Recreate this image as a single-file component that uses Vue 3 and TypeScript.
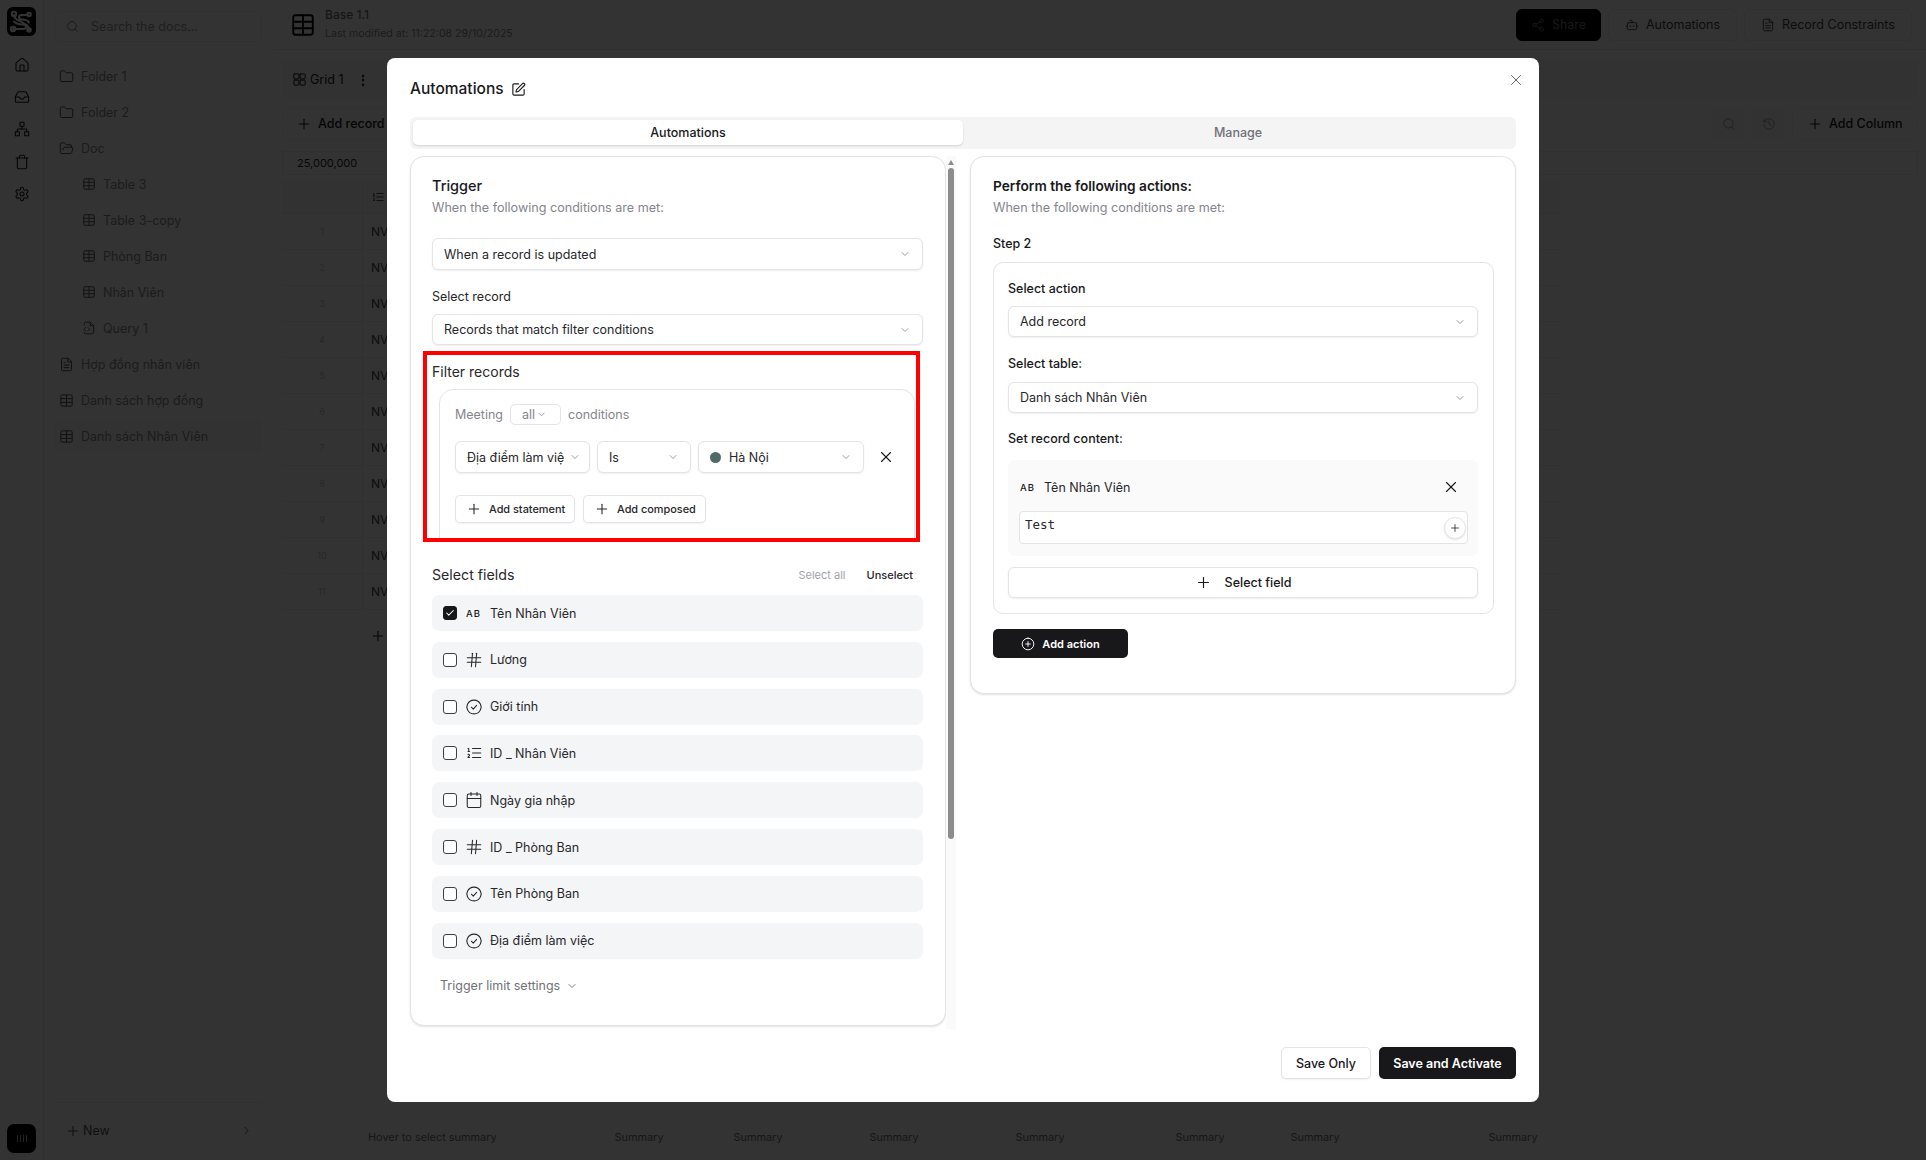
<script setup lang="ts">
const icons: Record<string, string[]> = {
  home: ['M15 21v-8a1 1 0 0 0-1-1h-4a1 1 0 0 0-1 1v8', 'M3 10a2 2 0 0 1 .709-1.528l7-5.999a2 2 0 0 1 2.582 0l7 5.999A2 2 0 0 1 21 10v9a2 2 0 0 1-2 2H5a2 2 0 0 1-2-2z'],
  inbox: ['M22 12h-6l-2 3h-4l-2-3H2', 'M5.45 5.11 2 12v6a2 2 0 0 0 2 2h16a2 2 0 0 0 2-2v-6l-3.45-6.89A2 2 0 0 0 16.76 4H7.24a2 2 0 0 0-1.79 1.11z'],
  network: ['M16 16h6v6h-6z', 'M2 16h6v6H2z', 'M9 2h6v6H9z', 'M5 16v-3a1 1 0 0 1 1-1h12a1 1 0 0 1 1 1v3', 'M12 12V8'],
  trash: ['M3 6h18', 'M19 6v14a2 2 0 0 1-2 2H7a2 2 0 0 1-2-2V6', 'M8 6V4a2 2 0 0 1 2-2h4a2 2 0 0 1 2 2v2'],
  settings: ['M12.22 2h-.44a2 2 0 0 0-2 2v.18a2 2 0 0 1-1 1.73l-.43.25a2 2 0 0 1-2 0l-.15-.08a2 2 0 0 0-2.73.73l-.22.38a2 2 0 0 0 .73 2.73l.15.1a2 2 0 0 1 1 1.72v.51a2 2 0 0 1-1 1.74l-.15.09a2 2 0 0 0-.73 2.73l.22.38a2 2 0 0 0 2.73.73l.15-.08a2 2 0 0 1 2 0l.43.25a2 2 0 0 1 1 1.73V20a2 2 0 0 0 2 2h.44a2 2 0 0 0 2-2v-.18a2 2 0 0 1 1-1.73l.43-.25a2 2 0 0 1 2 0l.15.08a2 2 0 0 0 2.73-.73l.22-.39a2 2 0 0 0-.73-2.73l-.15-.08a2 2 0 0 1-1-1.74v-.5a2 2 0 0 1 1-1.74l.15-.09a2 2 0 0 0 .73-2.73l-.22-.38a2 2 0 0 0-2.73-.73l-.15.08a2 2 0 0 1-2 0l-.43-.25a2 2 0 0 1-1-1.73V4a2 2 0 0 0-2-2z', 'M12 9a3 3 0 1 0 0 6 3 3 0 0 0 0-6z'],
  folder: ['M20 20a2 2 0 0 0 2-2V8a2 2 0 0 0-2-2h-7.9a2 2 0 0 1-1.69-.9L9.6 3.9A2 2 0 0 0 7.93 3H4a2 2 0 0 0-2 2v13a2 2 0 0 0 2 2Z'],
  folderOpen: ['m6 14 1.5-2.9A2 2 0 0 1 9.24 10H20a2 2 0 0 1 1.94 2.5l-1.54 6a2 2 0 0 1-1.95 1.5H4a2 2 0 0 1-2-2V5a2 2 0 0 1 2-2h3.9a2 2 0 0 1 1.69.9l.81 1.2a2 2 0 0 0 1.67.9H18a2 2 0 0 1 2 2v2'],
  table: ['M3 5a2 2 0 0 1 2-2h14a2 2 0 0 1 2 2v14a2 2 0 0 1-2 2H5a2 2 0 0 1-2-2z', 'M3 9h18', 'M3 15h18', 'M12 3v18'],
  fileCode: ['M4 7V4a2 2 0 0 1 2-2h8l6 6v12a2 2 0 0 1-2 2H6a2 2 0 0 1-2-2v-1', 'M14 2v6h6', 'm6 11-3 3 3 3', 'm10 11 3 3-3 3'],
  fileText: ['M14 2H6a2 2 0 0 0-2 2v16a2 2 0 0 0 2 2h12a2 2 0 0 0 2-2V8z', 'M14 2v6h6', 'M8 13h8', 'M8 17h8', 'M8 9h2'],
  search: ['M11 3a8 8 0 1 0 0 16 8 8 0 0 0 0-16z', 'm21 21-4.3-4.3'],
  plus: ['M5 12h14', 'M12 5v14'],
  x: ['M18 6 6 18', 'm6 6 12 12'],
  down: ['m6 9 6 6 6-6'],
  right: ['m9 18 6-6-6-6'],
  grid: ['M4 3h6a1 1 0 0 1 1 1v6a1 1 0 0 1-1 1H4a1 1 0 0 1-1-1V4a1 1 0 0 1 1-1z', 'M14 3h6a1 1 0 0 1 1 1v6a1 1 0 0 1-1 1h-6a1 1 0 0 1-1-1V4a1 1 0 0 1 1-1z', 'M4 13h6a1 1 0 0 1 1 1v6a1 1 0 0 1-1 1H4a1 1 0 0 1-1-1v-6a1 1 0 0 1 1-1z', 'M14 13h6a1 1 0 0 1 1 1v6a1 1 0 0 1-1 1h-6a1 1 0 0 1-1-1v-6a1 1 0 0 1 1-1z'],
  share: ['M18 2a3 3 0 1 0 0 6 3 3 0 0 0 0-6z', 'M6 9a3 3 0 1 0 0 6 3 3 0 0 0 0-6z', 'M18 16a3 3 0 1 0 0 6 3 3 0 0 0 0-6z', 'm8.6 13.5 6.8 4', 'm15.4 6.5-6.8 4'],
  bot: ['M12 8V4H8', 'M6 8h12a2 2 0 0 1 2 2v8a2 2 0 0 1-2 2H6a2 2 0 0 1-2-2v-8a2 2 0 0 1 2-2z', 'M2 14h2', 'M20 14h2', 'M15 13v2', 'M9 13v2'],
  history: ['M3 12a9 9 0 1 0 9-9 9.75 9.75 0 0 0-6.74 2.74L3 8', 'M3 3v5h5', 'M12 7v5l4 2'],
  edit: ['M12 3H5a2 2 0 0 0-2 2v14a2 2 0 0 0 2 2h14a2 2 0 0 0 2-2v-7', 'M18.375 2.625a1 1 0 0 1 3 3l-9.013 9.014a2 2 0 0 1-.853.505l-2.873.84a.5.5 0 0 1-.62-.62l.84-2.873a2 2 0 0 1 .506-.852z'],
  hash: ['M3 9h18', 'M3 15h18', 'M10 3 8.500 21', 'M15.500 3 14 21'],
  status: ['M3.300 8.500A9.500 9.500 0 0 1 20.700 8.500', 'M3.300 15.500A9.500 9.500 0 0 0 20.700 15.500', 'M3.300 8.500 2.400 12l.9 3.500', 'M20.700 8.500l.9 3.500-.9 3.500', 'm8.500 12.300 2.500 2.500 4.500-5'],
  list: ['M10 12h11', 'M10 18h11', 'M10 6h11', 'M4 10h2', 'M4 6h1v4', 'M6 18H4c0-1 2-2 2-3s-1-1.5-2-1'],
  calendar: ['M8 2v4', 'M16 2v4', 'M3 6a2 2 0 0 1 2-2h14a2 2 0 0 1 2 2v14a2 2 0 0 1-2 2H5a2 2 0 0 1-2-2z', 'M3 10h18'],
  plusCircle: ['M12 2a10 10 0 1 0 0 20 10 10 0 0 0 0-20z', 'M8 12h8', 'M12 8v8'],
  check: ['M20 6 9 17l-5-5'],
  logo: ['M6 7C6 12 11 12 14.500 14.500S21 17 21 22', 'M20 7h-6c-4 0-4 4.500 0 4.500s6 1 7 3', 'M5 21h10c4 0 4-4.500 0-4.500s-7-1-9-3'],
}

const railIcons = ['home', 'inbox', 'network', 'trash', 'settings']
const tree = [
  { icon: 'folder', label: 'Folder 1', child: false },
  { icon: 'folder', label: 'Folder 2', child: false },
  { icon: 'folderOpen', label: 'Doc', child: false },
  { icon: 'table', label: 'Table 3', child: true },
  { icon: 'table', label: 'Table 3-copy', child: true },
  { icon: 'table', label: 'Phòng Ban', child: true },
  { icon: 'table', label: 'Nhân Viên', child: true },
  { icon: 'fileCode', label: 'Query 1', child: true },
  { icon: 'fileText', label: 'Hợp đồng nhân viên', child: false },
  { icon: 'table', label: 'Danh sách hợp đồng', child: false },
  { icon: 'table', label: 'Danh sách Nhân Viên', child: false, active: true },
]
const rows = [1, 2, 3, 4, 5, 6, 7, 8, 9, 10, 11]
const summaries = [118, 120, 152, 140, 180, 50, 346]
const fields = [
  { icon: 'ab', label: 'Tên Nhân Viên', on: true },
  { icon: 'hash', label: 'Lương', on: false },
  { icon: 'status', label: 'Giới tính', on: false },
  { icon: 'list', label: 'ID _ Nhân Viên', on: false },
  { icon: 'calendar', label: 'Ngày gia nhập', on: false },
  { icon: 'hash', label: 'ID _ Phòng Ban', on: false },
  { icon: 'status', label: 'Tên Phòng Ban', on: false },
  { icon: 'status', label: 'Địa điểm làm việc', on: false },
]
</script>

<template>
  <div class="page">
    <aside class="rail">
      <div class="logo">
        <svg viewBox="0 0 27 27" class="logo-svg" fill="none" stroke="currentColor" stroke-width="2" stroke-linecap="round">
          <path v-for="d in icons.logo" :key="d" :d="d" />
          <circle cx="6" cy="6" r="2.200" />
          <circle cx="21" cy="6.500" r="1.800" />
          <circle cx="5" cy="21" r="2.200" />
          <circle cx="21" cy="22" r="1.800" />
        </svg>
      </div>
      <nav class="rail-nav">
        <svg v-for="name in railIcons" :key="name" class="ico rail-ico" viewBox="0 0 24 24">
          <path v-for="d in icons[name]" :key="d" :d="d" />
        </svg>
      </nav>
      <div class="avatar"><i></i><i></i><i></i><i></i></div>
    </aside>

    <aside class="side">
      <div class="search">
        <svg class="ico s13" viewBox="0 0 24 24"><path v-for="d in icons.search" :key="d" :d="d" /></svg>
        <span>Search the docs...</span>
      </div>
      <ul class="tree">
        <li v-for="t in tree" :key="t.label" class="tree-item" :class="{ child: t.child, active: t.active }">
          <svg class="ico" :class="t.child ? 's14' : 's15'" viewBox="0 0 24 24"><path v-for="d in icons[t.icon]" :key="d" :d="d" /></svg>
          <span>{{ t.label }}</span>
        </li>
      </ul>
      <div class="side-foot">
        <svg class="ico s16" viewBox="0 0 24 24"><path v-for="d in icons.plus" :key="d" :d="d" /></svg>
        <span>New</span>
        <svg class="ico s13 side-chev" viewBox="0 0 24 24"><path v-for="d in icons.right" :key="d" :d="d" /></svg>
      </div>
    </aside>

    <main class="main">
      <header class="top">
        <svg class="ico base-ico" viewBox="0 0 24 24"><path v-for="d in icons.table" :key="d" :d="d" /></svg>
        <div class="top-text">
          <div class="base-name">Base 1.1</div>
          <div class="base-sub">Last modified at: 11:22:08 29/10/2025</div>
        </div>
        <button class="top-btn dark w85">
          <svg class="ico s14" viewBox="0 0 24 24"><path v-for="d in icons.share" :key="d" :d="d" /></svg>Share
        </button>
        <button class="top-btn w129">
          <svg class="ico s14" viewBox="0 0 24 24"><path v-for="d in icons.bot" :key="d" :d="d" /></svg>Automations
        </button>
        <button class="top-btn w168">
          <svg class="ico s14" viewBox="0 0 24 24"><path v-for="d in icons.fileText" :key="d" :d="d" /></svg>Record Constraints
        </button>
      </header>
      <div class="content">
        <div class="views">
          <div class="view-tab">
            <svg class="ico s15" viewBox="0 0 24 24"><path v-for="d in icons.grid" :key="d" :d="d" /></svg>
            <span>Grid 1</span>
            <b class="dots">⋮</b>
          </div>
        </div>
        <div class="toolbar">
          <div class="dashed add-rec">
            <svg class="ico s16" viewBox="0 0 24 24"><path v-for="d in icons.plus" :key="d" :d="d" /></svg>Add record
          </div>
          <div class="tool-square">
            <svg class="ico s14" viewBox="0 0 24 24"><path v-for="d in icons.search" :key="d" :d="d" /></svg>
          </div>
          <div class="tool-square">
            <svg class="ico s14" viewBox="0 0 24 24"><path v-for="d in icons.history" :key="d" :d="d" /></svg>
          </div>
          <div class="dashed add-col">
            <svg class="ico s16" viewBox="0 0 24 24"><path v-for="d in icons.plus" :key="d" :d="d" /></svg>Add Column
          </div>
        </div>
        <div class="formula">25,000,000</div>
        <div class="table">
          <div class="thead">
            <div class="cell-n"></div>
            <div class="cell-id">
              <svg class="ico s14" viewBox="0 0 24 24"><path v-for="d in icons.list" :key="d" :d="d" /></svg>
            </div>
          </div>
          <div v-for="r in rows" :key="r" class="trow">
            <div class="cell-n num">{{ r }}</div>
            <div class="cell-id">NV</div>
          </div>
          <div class="tadd">
            <svg class="ico s16" viewBox="0 0 24 24"><path v-for="d in icons.plus" :key="d" :d="d" /></svg>
          </div>
        </div>
      </div>
      <footer class="summary">
        <span class="sum-first">Hover to select summary</span>
        <span v-for="(w, i) in summaries" :key="i" class="sum-cell" :style="{ width: w + 'px' }">Summary</span>
      </footer>
    </main>

    <div class="overlay">
      <section class="modal">
        <svg class="ico close" viewBox="0 0 24 24"><path v-for="d in icons.x" :key="d" :d="d" /></svg>
        <h1 class="m-title">
          Automations
          <svg class="ico s15 edit" viewBox="0 0 24 24"><path v-for="d in icons.edit" :key="d" :d="d" /></svg>
        </h1>
        <div class="tabs">
          <div class="tab on">Automations</div>
          <div class="tab">Manage</div>
        </div>
        <div class="cols">
          <div class="left-col">
            <div class="panel left">
              <h2 class="p-title">Trigger</h2>
              <p class="p-sub">When the following conditions are met:</p>
              <div class="sel mt20">
                <span>When a record is updated</span>
                <svg class="ico chev" viewBox="0 0 24 24"><path :d="icons.down[0]" /></svg>
              </div>
              <div class="label mt17">Select record</div>
              <div class="sel mt7 h31">
                <span>Records that match filter conditions</span>
                <svg class="ico chev" viewBox="0 0 24 24"><path :d="icons.down[0]" /></svg>
              </div>

              <div class="red">
                <div class="section-title">Filter records</div>
                <div class="filter-box">
                  <div class="meeting">
                    <span>Meeting</span>
                    <span class="pill">all<svg class="ico chev-s" viewBox="0 0 24 24"><path :d="icons.down[0]" /></svg></span>
                    <span>conditions</span>
                  </div>
                  <div class="cond">
                    <div class="sel f-field">
                      <span class="clip">Địa điểm làm việ</span>
                      <svg class="ico chev" viewBox="0 0 24 24"><path :d="icons.down[0]" /></svg>
                    </div>
                    <div class="sel f-op">
                      <span>Is</span>
                      <svg class="ico chev" viewBox="0 0 24 24"><path :d="icons.down[0]" /></svg>
                    </div>
                    <div class="sel f-val">
                      <span class="val"><i class="dot"></i>Hà Nội</span>
                      <svg class="ico chev" viewBox="0 0 24 24"><path :d="icons.down[0]" /></svg>
                    </div>
                    <svg class="ico s18 cond-x" viewBox="0 0 24 24"><path v-for="d in icons.x" :key="d" :d="d" /></svg>
                  </div>
                  <div class="adds">
                    <button class="add-btn w120">
                      <svg class="ico s16" viewBox="0 0 24 24"><path v-for="d in icons.plus" :key="d" :d="d" /></svg>Add statement
                    </button>
                    <button class="add-btn w123">
                      <svg class="ico s16" viewBox="0 0 24 24"><path v-for="d in icons.plus" :key="d" :d="d" /></svg>Add composed
                    </button>
                  </div>
                </div>
              </div>

              <div class="fields-head">
                <span class="section-title wide">Select fields</span>
                <span class="sel-all">Select all</span>
                <span class="unsel">Unselect</span>
              </div>
              <div class="fields">
                <div v-for="f in fields" :key="f.label" class="field">
                  <span class="box" :class="{ on: f.on }">
                    <svg v-if="f.on" class="ico tick" viewBox="0 0 24 24"><path :d="icons.check[0]" /></svg>
                  </span>
                  <span v-if="f.icon === 'ab'" class="ab">AB</span>
                  <svg v-else class="ico s18 f-ico" viewBox="0 0 24 24"><path v-for="d in icons[f.icon]" :key="d" :d="d" /></svg>
                  <span class="f-label">{{ f.label }}</span>
                </div>
              </div>
              <div class="limit">
                Trigger limit settings
                <svg class="ico lim-chev" viewBox="0 0 24 24"><path :d="icons.down[0]" /></svg>
              </div>
            </div>
            <div class="scroll">
              <span class="arrow"></span>
              <span class="thumb"></span>
            </div>
          </div>

          <div class="panel right">
            <h2 class="p-title strong">Perform the following actions:</h2>
            <p class="p-sub">When the following conditions are met:</p>
            <div class="label mt16 med">Step 2</div>
            <div class="step">
              <div class="label med">Select action</div>
              <div class="sel mt7 h31">
                <span>Add record</span>
                <svg class="ico chev" viewBox="0 0 24 24"><path :d="icons.down[0]" /></svg>
              </div>
              <div class="label mt17 med">Select table:</div>
              <div class="sel mt8 h31">
                <span>Danh sách Nhân Viên</span>
                <svg class="ico chev" viewBox="0 0 24 24"><path :d="icons.down[0]" /></svg>
              </div>
              <div class="label mt16 med">Set record content:</div>
              <div class="content-block">
                <div class="cb-head">
                  <span class="ab">AB</span>
                  <span class="f-label">Tên Nhân Viên</span>
                  <svg class="ico s18 cb-x" viewBox="0 0 24 24"><path v-for="d in icons.x" :key="d" :d="d" /></svg>
                </div>
                <div class="cb-input">
                  <span>Test</span>
                  <span class="cb-plus">
                    <svg class="ico s12" viewBox="0 0 24 24"><path v-for="d in icons.plus" :key="d" :d="d" /></svg>
                  </span>
                </div>
              </div>
              <button class="select-field">
                <svg class="ico s17" viewBox="0 0 24 24"><path v-for="d in icons.plus" :key="d" :d="d" /></svg>
                Select field
              </button>
            </div>
            <button class="add-action">
              <svg class="ico s14" viewBox="0 0 24 24"><path v-for="d in icons.plusCircle" :key="d" :d="d" /></svg>
              Add action
            </button>
          </div>
        </div>
        <div class="foot">
          <button class="save">Save Only</button>
          <button class="activate">Save and Activate</button>
        </div>
      </section>
    </div>
  </div>
</template>

<style>
html, body { margin: 0; padding: 0; background: #fff; }
</style>

<style scoped>
* { box-sizing: border-box; }
.page { width: 1926px; height: 1160px; display: flex; overflow: hidden; position: relative; font-family: Inter, "Noto Sans", sans-serif; color: #18181b; background: #fff; }
button { font-family: inherit; cursor: pointer; }
h1, h2, p, ul { margin: 0; padding: 0; }
.ico { fill: none; stroke: currentColor; stroke-width: 1.6; stroke-linecap: round; stroke-linejoin: round; flex: none; display: block; }
.s12 { width: 12px; height: 12px; }
.s13 { width: 13px; height: 13px; }
.s14 { width: 14px; height: 14px; }
.s15 { width: 15px; height: 15px; }
.s16 { width: 16px; height: 16px; }
.s17 { width: 17px; height: 17px; }
.s18 { width: 18px; height: 18px; }

/* background app */
.rail { width: 44px; border-right: 1px solid #e9e9ec; display: flex; flex-direction: column; align-items: center; padding: 7px 0; flex: none; }
.logo { width: 29px; height: 29px; background: #000; border-radius: 6px; color: #fff; display: flex; align-items: center; justify-content: center; }
.logo-svg { width: 27px; height: 27px; }
.rail-nav { display: flex; flex-direction: column; gap: 16.200px; margin-top: 21px; color: #18181b; }
.rail-ico { width: 16px; height: 16px; }
.avatar { margin-top: auto; width: 29px; height: 29px; background: #000; border-radius: 7px; display: flex; align-items: flex-end; justify-content: center; gap: 2px; padding-bottom: 11px; }
.avatar i { width: 1px; height: 7px; background: #aaa; }
.side { width: 230px; flex: none; display: flex; flex-direction: column; padding: 11px 12px 0 10px; }
.search { height: 31px; border: 1px solid #f0f0f2; border-radius: 7px; display: flex; align-items: center; gap: 12px; padding-left: 11px; font-size: 12.500px; color: #9a9aa2; width: 208px; }
.search .ico { color: #71717a; }
.tree { list-style: none; margin-top: 16px; display: flex; flex-direction: column; }
.tree-item { height: 36px; display: flex; align-items: center; gap: 7px; padding-left: 5px; font-size: 12.500px; color: #8a8a92; width: 208px; border-radius: 6px; }
.tree-item .ico { color: #52525b; }
.tree-item.child { padding-left: 28px; }
.tree-item.active { background: #fafafa; }
.side-foot { margin-top: auto; height: 58px; border-top: 1px solid #eeeeee; display: flex; align-items: center; gap: 2px; padding: 0 0 2px 11px; font-size: 12.500px; color: #52525b; }
.side-chev { margin-left: auto; margin-right: 9px; }

.main { flex: 1; min-width: 0; display: flex; flex-direction: column; }
.top { height: 50px; border-bottom: 1px solid #ececee; display: flex; align-items: center; padding: 0 14px 0 16px; gap: 7px; flex: none; }
.base-ico { width: 26px; height: 26px; color: #000; stroke-width: 1.700; }
.top-text { margin-left: 2px; margin-right: auto; }
.base-name { font-size: 12px; color: #71717a; line-height: 16px; font-weight: 500; }
.base-sub { font-size: 10.600px; color: #8a8a92; line-height: 16px; margin-top: 3px; }
.top-btn { height: 32px; border: 1px solid #eeeef0; background: #fff; border-radius: 6px; display: flex; align-items: center; justify-content: center; gap: 7px; padding: 0; font-size: 12.500px; color: #3f3f46; flex: none; }
.top-btn.dark { background: #000; border-color: #000; color: #777; }
.w85 { width: 85px; }
.w129 { width: 129px; }
.w168 { width: 168px; }
.content { flex: 1; padding: 9px 8px 0; min-height: 0; }
.views { height: 41px; background: #f7f7f8; border-radius: 8px; padding: 3px 2px; }
.view-tab { width: 94px; height: 35px; background: #f9f9fa; display: flex; align-items: center; gap: 3px; padding-left: 8px; font-size: 12.500px; color: #18181b; border-radius: 6px; }
.view-tab .dots { margin-left: 9px; font-size: 14px; color: #18181b; }
.toolbar { margin-top: 8px; height: 32px; display: flex; gap: 7px; align-items: stretch; }
.dashed { border: 1px dashed #eeeeee; border-radius: 6px; display: flex; align-items: center; gap: 6px; padding-bottom: 1px; font-size: 12.500px; color: #18181b; font-weight: 500; }
.add-rec { width: 120px; padding-left: 13px; margin-right: auto; }
.add-col { width: 126px; padding-left: 14px; }
.tool-square { width: 33px; background: #f7f7f8; border-radius: 6px; display: flex; align-items: center; justify-content: center; color: #a1a1aa; }
.formula { margin-top: 11px; height: 24px; border: 1px solid #eeeeee; font-size: 11px; padding-left: 14px; line-height: 22px; color: #27272a; }
.table { margin-top: 5px; width: 1278px; }
.thead { height: 34px; display: flex; background: #f7f7f8; border-bottom: 1px solid #eeeeee; }
.trow { height: 36px; display: flex; border-bottom: 1px solid #f0f0f0; }
.cell-n { width: 81px; border-right: 1px solid #eeeeee; }
.num { font-size: 9px; color: #c6c6cb; text-align: center; line-height: 36px; }
.cell-id { padding-left: 8px; font-size: 12px; line-height: 36px; color: #3f3f46; display: flex; align-items: center; }
.tadd { height: 52px; display: flex; align-items: center; padding-left: 88px; color: #18181b; background: #fcfcfc; }
.summary { height: 46px; flex: none; display: flex; align-items: center; padding-left: 8px; font-size: 10.900px; color: #71717a; }
.sum-first { width: 298px; padding-left: 86px; }
.sum-cell { text-align: center; flex: none; }

/* overlay + modal */
.overlay { position: absolute; inset: 0; background: rgba(0, 0, 0, .8); display: flex; align-items: center; justify-content: center; }
.modal { position: relative; width: 1152px; height: 1044px; background: #fff; border-radius: 8px; padding: 20px 23px 23px; display: flex; flex-direction: column; color: #18181b; }
.close { position: absolute; top: 13px; right: 14px; width: 18px; height: 18px; color: #52525b; stroke-width: 1.200; }
.m-title { font-size: 15.500px; line-height: 22px; font-weight: 500; display: flex; align-items: center; gap: 7px; height: 22px; }
.edit { stroke-width: 1.800; }
.tabs { margin-top: 17px; height: 32px; background: #f4f4f5; border-radius: 6px; padding: 3px; display: flex; flex: none; }
.tab { flex: 1; text-align: center; font-size: 12.500px; line-height: 25px; height: 25px; color: #71717a; font-weight: 500; border-radius: 5px; }
.tab.on { background: #fff; color: #18181b; box-shadow: 0 1px 2px rgba(0, 0, 0, .14); }
.cols { margin-top: 7px; display: flex; gap: 14px; align-items: flex-start; }
.left-col { width: 546px; display: flex; flex: none; }
.panel { background: #fff; border: 1px solid #e4e4e7; border-radius: 14px; box-shadow: 0 1px 2px rgba(0, 0, 0, .12); }
.left { width: 536px; height: 870px; padding: 19px 22px 0 21px; }
.right { flex: 1; height: 538px; padding: 19px 21px 0 22px; }
.p-title { font-size: 14.500px; line-height: 20px; font-weight: 500; }
.p-title.strong { font-size: 13.700px; font-weight: 600; }
.p-sub { font-size: 12.600px; line-height: 20px; color: #85858d; margin-top: 2px; }
.label { font-size: 12.500px; line-height: 20px; color: #27272a; }
.label.med { font-weight: 500; color: #18181b; }
.mt7 { margin-top: 7px; }
.mt8 { margin-top: 8px; }
.mt16 { margin-top: 16px; }
.mt17 { margin-top: 17px; }
.mt20 { margin-top: 20px; }
.sel { height: 32px; border: 1px solid #e4e4e7; border-radius: 6px; display: flex; align-items: center; justify-content: space-between; padding: 0 11px; font-size: 12.500px; color: #27272a; box-shadow: 0 1px 2px rgba(0, 0, 0, .07); background: #fff; }
.h31 { height: 31px; }
.chev { width: 12px; height: 12px; color: #71717a; stroke-width: 1.400; }
.red { margin: 6px 3px 0 -9px; height: 191px; border: 4px solid #fe0000; padding: 7px 0 0 5px; overflow: hidden; }
.section-title { font-size: 14px; line-height: 20px; color: #27272a; }
.section-title.wide { font-size: 14.200px; }
.filter-box { margin: 7px 1px 0 7px; height: 170px; border: 1px solid #e4e4e7; border-radius: 14px; padding: 14px 15px 0; }
.meeting { display: flex; align-items: center; gap: 7px; font-size: 12.500px; color: #85858d; height: 20px; }
.pill { width: 51px; height: 21px; border: 1px solid #e4e4e7; border-radius: 5px; display: flex; align-items: center; padding-left: 11px; gap: 1px; }
.chev-s { width: 11px; height: 11px; }
.cond { margin-top: 17px; display: flex; align-items: center; gap: 7px; }
.f-field { width: 135px; padding-right: 8px; gap: 0; }
.clip { white-space: nowrap; overflow: hidden; width: 101px; }
.f-op { width: 94px; }
.f-val { width: 166px; }
.val { display: flex; align-items: center; gap: 8px; }
.dot { width: 11px; height: 11px; border-radius: 50%; background: #4e6b68; }
.cond-x { margin-left: 6px; stroke-width: 1.500; color: #18181b; }
.adds { margin-top: 22px; display: flex; gap: 8px; }
.add-btn { height: 28px; border: 1px solid #e4e4e7; border-radius: 5px; background: #fff; display: flex; align-items: center; gap: 7px; padding: 0 0 0 10px; font-size: 10.900px; font-weight: 500; color: #27272a; box-shadow: 0 1px 2px rgba(0, 0, 0, .06); }
.w120 { width: 120px; }
.w123 { width: 123px; }
.fields-head { margin-top: 23px; display: flex; align-items: center; height: 20px; padding-right: 10px; }
.fields-head .section-title { margin-right: auto; }
.sel-all { font-size: 11px; color: #a1a1aa; margin-right: 21px; }
.unsel { font-size: 11px; color: #27272a; font-weight: 500; }
.fields { margin-top: 10px; display: flex; flex-direction: column; gap: 10.830px; }
.field { height: 36px; background: #f4f5f7; border-radius: 7px; display: flex; align-items: center; padding-left: 11px; font-size: 12.500px; }
.box { width: 14px; height: 14px; border: 1.500px solid #3f3f46; border-radius: 3px; flex: none; display: flex; align-items: center; justify-content: center; margin-right: 8px; background: #fff; }
.box.on { background: #18181b; border-color: #18181b; color: #fff; }
.tick { width: 10px; height: 10px; stroke-width: 2.500; }
.f-ico { stroke-width: 1.400; color: #27272a; }
.ab { font-size: 9.500px; font-weight: 500; letter-spacing: 1px; width: 18px; padding-left: 1px; flex: none; color: #18181b; }
.f-label { margin-left: 7px; color: #27272a; }
.limit { margin: 17px 0 0 8px; height: 20px; display: flex; align-items: center; gap: 6px; font-size: 12.500px; color: #71717a; }
.lim-chev { width: 12px; height: 12px; color: #52525b; }
.scroll { width: 10px; height: 873px; background: #fafafa; position: relative; flex: none; display: flex; flex-direction: column; align-items: center; padding-top: 4px; }
.arrow { width: 0; height: 0; border-left: 3px solid transparent; border-right: 3px solid transparent; border-bottom: 5px solid #8c8c8c; }
.thumb { width: 6px; height: 671px; background: #8c8c8c; border-radius: 3px; margin-top: 3px; }
.step { margin-top: 8px; border: 1px solid #e4e4e7; border-radius: 10px; padding: 16px 15px 15px 14px; height: 352px; }
.content-block { margin-top: 11px; height: 96px; background: #fafafa; border-radius: 7px; padding: 0 10px 0 11px; }
.cb-head { height: 51px; display: flex; align-items: center; font-size: 12.500px; padding-top: 3px; }
.cb-head .ab { margin-left: 0; }
.cb-x { margin-left: auto; margin-right: 8px; stroke-width: 1.500; }
.cb-input { height: 33px; border: 1px solid #e4e4e7; border-radius: 4px; background: #fff; position: relative; font-family: "DejaVu Sans Mono", monospace; font-size: 12.500px; color: #27272a; padding: 6px 0 0 5px; line-height: 14px; }
.cb-plus { position: absolute; right: 1px; top: 5px; width: 22px; height: 22px; border: 1px solid #e4e4e7; border-radius: 50%; background: #fff; display: flex; align-items: center; justify-content: center; box-shadow: 0 1px 2px rgba(0, 0, 0, .1); }
.select-field { margin-top: 11px; width: 100%; height: 31px; border: 1px solid #e4e4e7; border-radius: 6px; background: #fff; display: flex; align-items: center; justify-content: center; gap: 13px; font-size: 12.500px; font-weight: 500; color: #18181b; box-shadow: 0 1px 2px rgba(0, 0, 0, .07); }
.add-action { margin-top: 15px; width: 135px; height: 29px; background: #18181b; border: 0; border-radius: 5px; color: #fff; font-size: 11px; font-weight: 600; display: flex; align-items: center; justify-content: center; gap: 7px; }
.foot { margin-top: auto; display: flex; justify-content: flex-end; gap: 8px; }
.save { width: 90px; height: 32px; border: 1px solid #e4e4e7; border-radius: 5px; background: #fff; font-size: 12.500px; font-weight: 500; color: #18181b; box-shadow: 0 1px 2px rgba(0, 0, 0, .06); }
.activate { width: 137px; height: 32px; border: 0; border-radius: 5px; background: #18181b; color: #fff; font-size: 12.500px; font-weight: 600; }
</style>
